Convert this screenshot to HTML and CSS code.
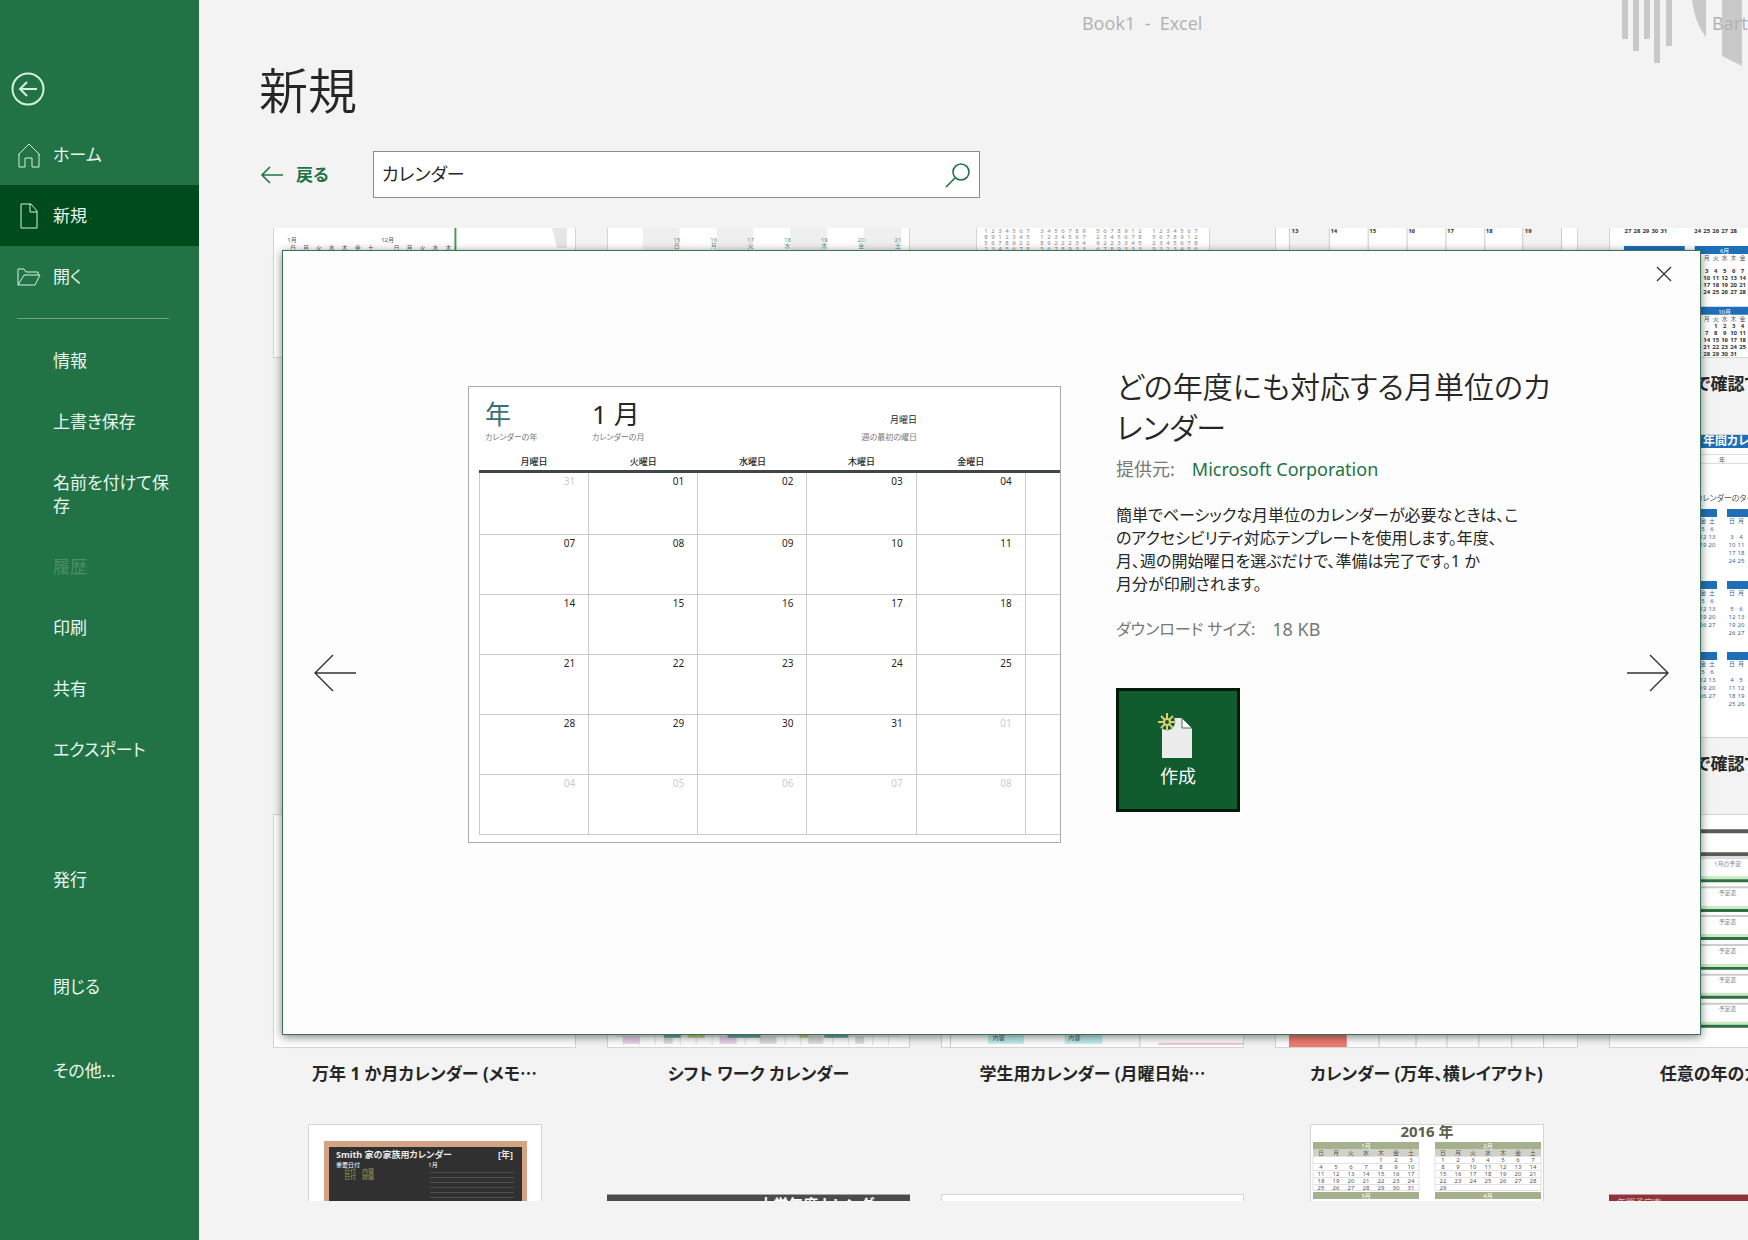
FILE: index.html
```html
<!DOCTYPE html>
<html lang="ja">
<head>
<meta charset="utf-8">
<title>Book1 - Excel</title>
<link rel="stylesheet" href="styles.css">
</head>
<body>
<div class="app">
  <nav class="sidebar">
    <button class="back-circle" aria-label="戻る">
      <svg width="34" height="34" viewBox="0 0 34 34"><circle cx="17" cy="17" r="15.5"/><path d="M26 17H9M16 10l-7 7 7 7"/></svg>
    </button>
    <a class="item" href="#"><svg width="24" height="26" viewBox="0 0 24 26"><path d="M1 13L12 2l11 11M2 12v13h6v-9h7v9h7V12"/></svg>ホーム</a>
    <a class="item active" href="#"><svg width="24" height="26" viewBox="0 0 24 26"><path d="M4 1h10l6 7v17H4zM13 1v8h7"/></svg>新規</a>
    <a class="item" href="#"><svg width="24" height="26" viewBox="0 0 24 26"><path d="M1 21V5h6l2 3h12v3M1 21l6-10h16l-5 10z"/></svg>開く</a>
    <hr class="divider">
    <a class="item sub" href="#">情報</a>
    <a class="item sub" href="#">上書き保存</a>
    <a class="item sub" href="#">名前を付けて保<br>存</a>
    <a class="item sub disabled" href="#">履歴</a>
    <a class="item sub" href="#">印刷</a>
    <a class="item sub" href="#">共有</a>
    <a class="item sub" href="#">エクスポート</a>
    <a class="item sub publish" href="#">発行</a>
    <a class="item sub close-file" href="#">閉じる</a>
    <a class="item sub more" href="#">その他...</a>
  </nav>

  <main class="main">
    <svg class="decor" width="130" height="70" viewBox="0 0 130 70"><path d="M4 0h6v39H4zM15 0h6v51h-6zM26 0h6v39h-6zM36 0h6v63h-6zM48 0h6v46h-6zM74 0h14v37Q77 24 74 0zM104 0h20v66l-20-10z"/></svg>
    <header class="titlebar"><span>Book1&nbsp; -&nbsp; Excel</span><span class="user">Bart</span></header>
    <h1 class="title">新規</h1>
    <form class="search-row">
      <a class="back" href="#"><svg width="24" height="20" viewBox="0 0 24 20"><path stroke-width="1.6" d="M23 10H2M10 2l-8 8 8 8"/></svg>戻る</a>
      <div class="search">
        <input type="text" value="カレンダー" aria-label="テンプレートの検索">
        <button type="button" aria-label="検索"><svg width="26" height="26" viewBox="0 0 26 26"><g stroke-width="1.6"><circle cx="16" cy="10" r="8"/><path d="M10 16l-9 9"/></g></svg></button>
      </div>
    </form>

    <section class="results">
      <div class="grid">
        <a class="card" href="#"><svg class="thumb wide" viewBox="0 0 304 234"><path fill="#e6e6e6" d="M279 100h16v24h-10z"/><path stroke="#4a9a5b" stroke-width="2" d="M183 100v30"/><g class="days" data-x="19" data-y="118" data-dx="96" data-dy="7" data-rows="1月 12月"></g><g class="days" data-x="20" data-y="126" data-dx="13" data-dy="7" data-rows="日 月 火 水 木 金 土 . 日 月 火 水 木"></g></svg></a>
        <a class="card" href="#"><svg class="thumb wide" viewBox="0 0 304 234"><path fill="#efefef" d="M36 100h37v34H36zM110 100h37v34h-37zM184 100h37v34h-37zM258 100h37v34h-37z"/><g class="days teal" data-x="70" data-y="118" data-dx="37" data-dy="6" data-rows="15 16 17 18 19 20 21/日 月 火 水 木 金 土"></g></svg></a>
        <a class="card" href="#"><svg class="thumb tall" viewBox="0 0 234 304"><g class="days faint" data-x="10" data-y="179" data-dx="7" data-dy="6" data-rows="1 2 3 4 5 6 7 . 3 4 5 6 7 8 9 . 5 6 7 8 9 1 2 . 1 2 3 4 5 6 7/8 9 1 2 3 4 5 . 1 2 3 4 5 6 7 . 2 3 4 5 6 7 8 . 5 6 7 8 9 1 2/5 6 7 8 9 2 2 . 8 9 2 2 2 3 4 . 9 2 2 3 3 4 5 . 2 3 4 5 6 7 8/2 3 4 5 6 7 8 . 5 6 7 8 9 3 3 . 6 7 8 9 3 3 3 . 9 2 2 3 4 5 6"></g></svg></a>
        <a class="card" href="#"><svg class="thumb wide" viewBox="0 0 304 234"><path fill="#f3f3f3" d="M14 100h40v34H14zM248 100h39v34h-39z"/><path stroke="#ccc" d="M14.500 100v34M54.500 100v34M93.500 100v34M132.500 100v34M171.500 100v34M210.500 100v34M248.500 100v34M287.500 100v34"/><g class="days bold" data-x="20" data-y="109" data-dx="39" data-dy="7" data-rows="13 14 15 16 17 18 19"></g></svg></a>
        <a class="card" href="#"><svg class="thumb wide" viewBox="0 0 304 234"><path fill="#1f6fb8" d="M15 122h61v8H15zM86 122h61v8H86zM86 183h61v8H86z"/><g class="days bold" data-x="19" data-y="109" data-dx="9" data-dy="7" data-rows="27 28 29 30 31"></g><g class="days bold" data-x="89" data-y="109" data-dx="9" data-dy="7" data-rows="24 25 26 27 28"></g><g class="days white" data-x="116" data-y="129" data-dx="9" data-dy="61" data-rows="6月/10月"></g><g class="days" data-x="89" data-y="136" data-dx="9" data-dy="7" data-rows="日 月 火 水 木 金"></g><g class="days bold" data-x="89" data-y="149" data-dx="9" data-dy="7" data-rows="2 3 4 5 6 7/9 10 11 12 13 14/16 17 18 19 20 21/23 24 25 26 27 28"></g><g class="days" data-x="89" data-y="197" data-dx="9" data-dy="7" data-rows="日 月 火 水 木 金"></g><g class="days bold" data-x="89" data-y="204" data-dx="9" data-dy="7" data-rows=". . 1 2 3 4/6 7 8 9 10 11/13 14 15 16 17 18/20 21 22 23 24 25/27 28 29 30 31 ."></g></svg><span class="name">ひと目で確認できる年間カレ⋯</span></a>

        <span class="card"><svg class="thumb tall" viewBox="0 0 234 304"></svg></span>
        <span class="card"><svg class="thumb tall" viewBox="0 0 234 304"></svg></span>
        <span class="card"><svg class="thumb tall" viewBox="0 0 234 304"></svg></span>
        <span class="card"><svg class="thumb tall" viewBox="0 0 234 304"></svg></span>
        <a class="card" href="#"><svg class="thumb tall" viewBox="0 0 234 304"><path fill="#1f6fb8" d="M0 0h234v14H0zM24 75h49v8H24zM83 75h49v8H83zM24 147h49v8H24zM83 147h49v8H83zM24 218h49v8H24zM83 218h49v8H83z"/><path fill="none" stroke="#ddd" d="M20 20.500h200v9H20z"/><text class="t-head" x="59" y="11">年間カレンダー</text><text class="t-sub" x="51" y="67">カレンダーのタイトル</text><g class="days" data-x="78" data-y="28" data-dx="9" data-dy="8" data-rows="年"></g><g class="days blue" data-x="59" data-y="89" data-dx="9" data-dy="8" data-rows="金 土/5 6/12 13/19 20"></g><g class="days blue" data-x="88" data-y="89" data-dx="9" data-dy="8" data-rows="日 月/. ./3 4/10 11/17 18/24 25"></g><g class="days blue" data-x="59" data-y="161" data-dx="9" data-dy="8" data-rows="金 土/5 6/12 13/19 20/26 27"></g><g class="days blue" data-x="88" data-y="161" data-dx="9" data-dy="8" data-rows="日 月/. ./5 6/12 13/19 20/26 27"></g><g class="days blue" data-x="59" data-y="232" data-dx="9" data-dy="8" data-rows="金 土/5 6/12 13/19 20/26 27"></g><g class="days blue" data-x="88" data-y="232" data-dx="9" data-dy="8" data-rows="日 月/. ./4 5/11 12/18 19/25 26"></g></svg><span class="name">ひと目で確認できる年間カレ⋯</span></a>

        <a class="card" href="#"><svg class="thumb wide" viewBox="0 0 304 234"></svg><span class="name">万年 1 か月カレンダー (メモ⋯</span></a>
        <a class="card" href="#"><svg class="thumb wide" viewBox="0 0 304 234"><path stroke="#e5e5e5" d="M8 222.500h288M16.500 216v16M32.500 216v16M48.500 216v16M73.500 216v16M89.500 216v16M105.500 216v16M138.500 216v16M178.500 216v16M194.500 216v16M226.500 216v16M242.500 216v16M266.500 216v16M282.500 216v16"/><path fill="#e9cfea" d="M16 222h17v8H16zM113 222h17v8h-17z"/><path fill="#ddd" d="M57 220h9v10h-9zM153 222h17v8h-17zM202 222h15v8h-15zM249 222h9v8h-9z"/><path fill="#67a8a4" d="M57 218h17v6H57zM121 218h33v6h-33zM218 218h24v6h-24z"/><path fill="#c4cb7e" d="M81 218h17v6H81zM193 218h9v6h-9z"/></svg><span class="name">シフト ワーク カレンダー</span></a>
        <a class="card" href="#"><svg class="thumb wide" viewBox="0 0 304 234"><path fill="#bfeeee" d="M47 215h36v15H47zM124 215h38v15h-38z"/><path stroke="#ccc" d="M9.500 200v34M199.500 200v34"/><path stroke="#f2c4c9" stroke-width="2" d="M218 230h85"/><g class="days" data-x="58" data-y="226" data-dx="76" data-dy="6" data-rows="内容 内容"></g></svg><span class="name">学生用カレンダー (月曜日始⋯</span></a>
        <a class="card" href="#"><svg class="thumb wide" viewBox="0 0 304 234"><path fill="#ee7c73" d="M14 200h58v34H14z"/><path stroke="#ccc" d="M104.500 200v34M141.500 200v34M172.500 200v34M204.500 200v34M237.500 200v34M269.500 200v34"/></svg><span class="name">カレンダー (万年、横レイアウト)</span></a>
        <a class="card" href="#"><svg class="thumb wide" viewBox="0 0 304 234"><path fill="#5b5b55" d="M0 15h304v4H0zM0 38h304v4H0z"/><path fill="#ddd" d="M0 42h304v3H0z"/><path fill="#c9ecc5" d="M0 62h304v3H0zM0 92h304v3H0zM0 120h304v3H0zM0 150h304v3H0zM0 179h304v3H0zM0 208h304v3H0z"/><path fill="#2f7044" d="M0 65h304v3H0zM0 95h304v3H0zM0 123h304v3H0zM0 153h304v3H0zM0 182h304v3H0zM0 211h304v3H0z"/><path fill="#ccc" d="M0 72h304v2H0zM0 101h304v2H0zM0 130h304v2H0zM0 160h304v2H0zM0 189h304v2H0z"/><g class="days faint" data-x="119" data-y="52" data-dx="12" data-dy="29" data-rows="1月の予定/予定表/予定表/予定表/予定表/予定表"></g></svg><span class="name">任意の年のカレンダー (1⋯</span></a>

        <a class="card" href="#"><svg class="thumb tall" viewBox="0 0 234 304"><path fill="#d3a384" d="M16 17h203v270H16z"/><path fill="#303030" d="M21 23h193v260H21z"/><path stroke="#505050" d="M122 48.500h84M122 53.500h84M122 58.500h84M122 63.500h84M122 68.500h84M122 73.500h84"/><text class="t-board" x="28" y="34">Smith 家の家族用カレンダー</text><text class="t-board" x="190" y="34">[年]</text><g class="days white" data-x="40" data-y="43" data-dx="85" data-dy="6" data-rows="重要日付 1月"></g><g class="days gold" data-x="42" data-y="49" data-dx="18" data-dy="6" data-rows="日付 内容/日付 詳細"></g></svg></a>
        <a class="card" href="#"><svg class="thumb wide dark" viewBox="0 0 304 234"><path fill="#4b4b4b" d="M0 0h304v30H0z"/><text class="t-school" x="152" y="16">大学年度カレンダー</text></svg></a>
        <a class="card" href="#"><svg class="thumb wide" viewBox="0 0 304 234"></svg></a>
        <a class="card" href="#"><svg class="thumb tall" viewBox="0 0 234 304"><path fill="#a5b08d" d="M3 18h106v7H3zM125 18h106v7H125zM3 68h106v7H3zM125 68h106v7H125z"/><path fill="#d0d2c8" d="M3 25h106v7H3zM125 25h106v7H125z"/><path fill="none" stroke="#e5dfe5" d="M3 32.500h106v34H3zM125 32.500h106v34H125zM3 39.500h106M3 46.500h106M3 53.500h106M3 60.500h106M125 39.500h106M125 46.500h106M125 53.500h106M125 60.500h106"/><text class="t-year" x="117" y="13">2016 年</text><g class="days white" data-x="56" data-y="24" data-dx="122" data-dy="50" data-rows="1月 2月/3月 4月"></g><g class="days" data-x="11" data-y="31" data-dx="15" data-dy="7" data-rows="日 月 火 水 木 金 土/. . . . 1 2 3/4 5 6 7 8 9 10/11 12 13 14 15 16 17/18 19 20 21 22 23 24/25 26 27 28 29 30 31"></g><g class="days" data-x="133" data-y="31" data-dx="15" data-dy="7" data-rows="日 月 火 水 木 金 土/1 2 3 4 5 6 7/8 9 10 11 12 13 14/15 16 17 18 19 20 21/22 23 24 25 26 27 28/29 . . . . . ."></g></svg></a>
        <a class="card" href="#"><svg class="thumb wide red" viewBox="0 0 304 234"><path fill="#8d343b" d="M0 0h304v30H0z"/><text class="t-red" x="8" y="12">年間予定表</text></svg></a>
      </div>
    </section>

    <div class="dialog" role="dialog" aria-label="どの年度にも対応する月単位のカレンダー">
      <button class="close" aria-label="閉じる"><svg width="16" height="16" viewBox="0 0 16 16"><path stroke-width="1.3" d="M1 1l14 14M15 1L1 15"/></svg></button>
      <button class="arrow" aria-label="前へ"><svg width="44" height="40" viewBox="0 0 44 40"><path stroke-width="1.4" d="M43 20H2M20 2L2 20l18 18"/></svg></button>
      <div class="preview">
        <div class="pv-head">
          <div class="pv-year"><b>年</b><small>カレンダーの年</small></div>
          <div class="pv-month"><b>1 月</b><small>カレンダーの月</small></div>
          <div class="pv-start"><b>月曜日</b><small>週の最初の曜日</small></div>
        </div>
        <table class="calendar">
          <thead><tr><th>月曜日</th><th>火曜日</th><th>水曜日</th><th>木曜日</th><th>金曜日</th><th></th></tr></thead>
          <tbody>
            <tr><td class="out">31</td><td>01</td><td>02</td><td>03</td><td>04</td><td></td></tr>
            <tr><td>07</td><td>08</td><td>09</td><td>10</td><td>11</td><td></td></tr>
            <tr><td>14</td><td>15</td><td>16</td><td>17</td><td>18</td><td></td></tr>
            <tr><td>21</td><td>22</td><td>23</td><td>24</td><td>25</td><td></td></tr>
            <tr><td>28</td><td>29</td><td>30</td><td>31</td><td class="out">01</td><td></td></tr>
            <tr><td class="out">04</td><td class="out">05</td><td class="out">06</td><td class="out">07</td><td class="out">08</td><td></td></tr>
          </tbody>
        </table>
      </div>
      <div class="details">
        <h2>どの年度にも対応する月単位のカ<br>レンダー</h2>
        <p class="meta"><span>提供元:</span><a href="#">Microsoft Corporation</a></p>
        <p class="desc">簡単でベーシックな月単位のカレンダーが必要なときは、こ<br>のアクセシビリティ対応テンプレートを使用します。年度、<br>月、週の開始曜日を選ぶだけで、準備は完了です。1 か<br>月分が印刷されます。</p>
        <p class="meta"><span class="size-label">ダウンロード サイズ:</span><span>18 KB</span></p>
        <button class="create">
          <svg width="40" height="46" viewBox="4 0 40 46"><path fill="#ececec" d="M8 5h20l10 10v30H8z"/><path fill="#fff" stroke="#4d6b58" d="M28 5v10h10z"/><circle cx="13" cy="9" r="8" fill="#115c2f"/><g stroke="#d9cd70" stroke-width="2"><path d="M13 0v18M4 9h18M7 3l12 12M19 3L7 15"/></g><circle cx="13" cy="9" r="3" fill="#115c2f" stroke="#d9cd70" stroke-width="2"/></svg>
          作成
        </button>
      </div>
      <button class="arrow" aria-label="次へ"><svg width="44" height="40" viewBox="0 0 44 40"><path stroke-width="1.4" d="M1 20h41M24 2l18 18-18 18"/></svg></button>
    </div>
  </main>
</div>
<script src="script.js"></script>
</body>
</html>
```
FILE: styles.css
```css
* { box-sizing: border-box; }
body {
  margin: 0;
  font-family: "Noto Sans", "Noto Sans CJK JP", sans-serif;
  font-feature-settings: "palt";
  font-size: 17px;
  line-height: 23px;
  color: #262626;
  background: #f3f3f3;
}
a { color: inherit; text-decoration: none; }
button { font: inherit; border: 0; padding: 0; background: none; color: inherit; }
svg { display: block; flex: none; fill: none; }
h1, h2, p { margin: 0; font-weight: 400; }

.app { display: flex; height: 100vh; overflow: hidden; }

/* Green navigation column */
.sidebar { flex: none; width: 199px; background: #217346; color: #e9f7ee; }
.sidebar svg { stroke: #d5f2df; stroke-width: 1; }
.back-circle { display: block; margin: 72px 0 18px 11px; }
.back-circle svg { stroke-width: 2; }
.item { display: flex; align-items: center; gap: 12px; padding: 19px 0 19px 17px; height: 61px; }
.item.active { background: #004b1c; }
.item.sub { display: block; padding-left: 53px; height: auto; }
.item.disabled { color: #4a8f68; }
.divider { margin: 11px 30px 11px 17px; border: 0; height: 1px; background: #6da685; }
.publish { margin-top: 69px; }
.close-file { margin-top: 46px; }
.more { margin-top: 23px; }

/* Main column */
.main { position: relative; flex: 1; min-width: 0; display: flex; flex-direction: column; }
.decor { position: absolute; top: 0; right: 0; fill: #c9c9c9; }
.titlebar { position: relative; display: flex; justify-content: space-between; padding: 12px 0 0 57%; color: #b3b3b3; font-size: 18px; }
.user { width: 36px; overflow: hidden; white-space: nowrap; }
.title { margin: 25px 0 0 60px; font-size: 49px; line-height: 60px; font-weight: 350; }
.search-row { display: flex; align-items: center; margin: 31px 0 0 61px; }
.back { display: flex; align-items: center; gap: 12px; width: 113px; color: #217346; font-weight: 700; }
.back svg, .search svg { stroke: #217346; }
.search { display: flex; align-items: center; width: 607px; height: 47px; border: 1px solid #8c8c8c; background: #fff; padding: 0 8px; }
.search input { flex: 1; border: 0; outline: 0; padding: 0; font: inherit; font-feature-settings: inherit; color: inherit; background: none; font-size: 18px; }

/* Template results, scrolled part way down */
.results { flex: 1; min-height: 0; margin: 30px 0 39px 74px; overflow: hidden; }
.grid { display: grid; grid-template-columns: repeat(5, 303px); column-gap: 31px; margin-top: -174px; }
.card { display: flex; flex-direction: column; align-items: center; justify-content: flex-end; padding-bottom: 76px; }
.card:has(.name) { padding-bottom: 24px; }
.thumb { background: #fff; outline: 1px solid #d5d5d5; outline-offset: -1px; }
.wide { width: 303px; height: 234px; }
.tall { width: 234px; height: 304px; }
.dark, .red { outline: 0; }
.name { height: 52px; line-height: 52px; font-weight: 700; white-space: nowrap; }
.days text { font-size: 6px; text-anchor: middle; fill: #555; }
.days.bold text { font-weight: 700; fill: #333; }
.days.faint text { fill: #888; }
.days.teal text { fill: #5c8f86; }
.days.blue text { fill: #3b5f92; }
.days.white text { fill: #fff; }
.days.gold text { fill: #a09a55; }
.t-head { font-size: 12px; font-weight: 700; fill: #fff; }
.t-sub { font-size: 8px; fill: #555; }
.t-board { font-size: 9px; font-weight: 700; fill: #e8e8e8; }
.t-school { font-size: 15px; font-weight: 700; fill: #fff; }
.t-year { font-size: 15px; font-weight: 700; fill: #5b5f4c; text-anchor: middle; }
.t-red { font-size: 9px; fill: #e3b9bc; }

/* Template detail dialog */
.dialog {
  position: absolute; top: 250px; left: 83px; right: 47px; height: 785px;
  display: flex; align-items: flex-start;
  background: #fdfdfd; border: 1px solid #3c7258; box-shadow: 0 2px 9px rgba(0, 0, 0, .5);
}
.close { position: absolute; top: 15px; right: 28px; }
.close svg, .arrow svg { stroke: #333; }
.arrow { flex: none; width: 44px; margin-top: 402px; }
.arrow:nth-of-type(2) { margin-left: 30px; }
.arrow:last-child { margin-left: auto; margin-right: 30px; }
.preview { flex: none; width: 593px; height: 457px; margin: 135px 0 0 111px; border: 1px solid #ababab; padding-left: 10px; overflow: hidden; background: #fff; }
.pv-head { display: flex; height: 64px; padding: 10px 0 0 6px; }
.pv-head div { display: flex; flex-direction: column; width: 107px; }
.pv-head b { font-size: 26px; line-height: 34px; font-weight: 400; }
.pv-head small { font-size: 8px; line-height: 12px; color: #777; }
.pv-year b { color: #35717a; }
.pv-head .pv-start { width: 218px; align-items: flex-end; }
.pv-start b { font-size: 9px; line-height: 14px; padding-top: 16px; height: 34px; }
.calendar { width: 656px; height: 384px; border-collapse: collapse; table-layout: fixed; font-size: 10px; line-height: 12px; }
.calendar th { height: 20px; padding: 4px 0 0; font-size: 9px; font-weight: 500; border-bottom: 3px solid #3f4645; }
.calendar td { padding: 2px 13px 0 0; text-align: right; vertical-align: top; border: 1px solid #ccc; }
.calendar .out { color: #ccc; }
.details { flex: none; width: 450px; margin: 115px 0 0 55px; }
.details h2 { font-size: 30px; line-height: 41px; font-weight: 350; white-space: nowrap; }
.meta { display: flex; gap: 17px; margin-top: 10px; color: #777; font-size: 18px; }
.size-label { font-size: 16px; }
.meta a { color: #217346; }
.desc { margin: 23px 0 22px; font-size: 16px; white-space: nowrap; }
.create {
  display: flex; flex-direction: column; align-items: center; justify-content: center;
  width: 124px; height: 124px; margin-top: 47px; gap: 6px;
  border: 3px solid #03190b; background: #115c2f; color: #fff; font-size: 18px;
}
```
FILE: script.js
```js
// Fills each miniature day grid from its "/"-separated rows.
document.querySelectorAll('.days').forEach(function (g) {
  var d = g.dataset;
  d.rows.split('/').forEach(function (row, r) {
    row.split(' ').forEach(function (label, c) {
      if (label === '.') return;
      var t = document.createElementNS('http://www.w3.org/2000/svg', 'text');
      t.setAttribute('x', +d.x + c * d.dx);
      t.setAttribute('y', +d.y + r * d.dy);
      t.textContent = label;
      g.appendChild(t);
    });
  });
});
```
